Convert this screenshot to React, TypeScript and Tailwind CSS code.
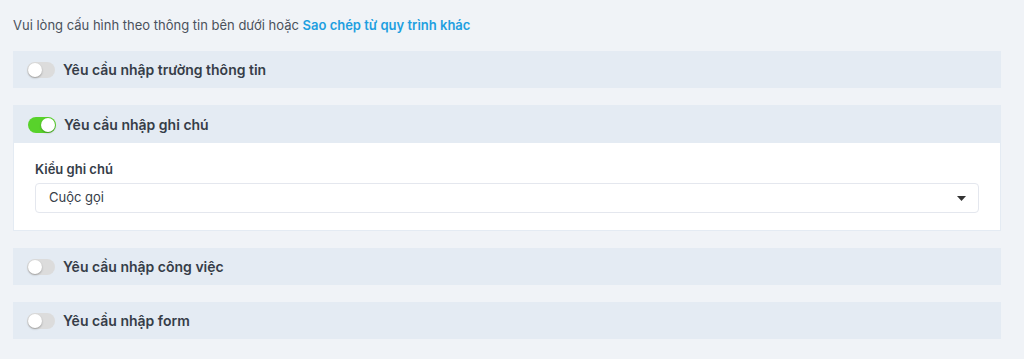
import React from "react";

const Toggle: React.FC<{ on?: boolean }> = ({ on }) => {
  return (
    <span
      className={
        "relative inline-flex h-[16px] w-[28px] shrink-0 items-center rounded-full " +
        (on ? "bg-[#58d22b]" : "bg-[#dcdcdc]")
      }
    >
      <span
        className={
          "absolute top-[1px] h-[14px] w-[14px] rounded-full bg-white shadow-[0_1px_2px_rgba(0,0,0,0.3)] " +
          (on ? "left-[13px]" : "left-[1px]")
        }
      />
    </span>
  );
};

const SectionHeader: React.FC<{ title: string; on?: boolean }> = ({ title, on }) => (
  <div className="flex h-[37px] items-center gap-[8px] bg-[#e4ebf3] px-[14px]">
    <Toggle on={on} />
    <span className="text-[14px] font-semibold text-[#363d48]">{title}</span>
  </div>
);

const App: React.FC = () => {
  return (
    <div
      className="min-h-[359px] w-[1024px] bg-[#f0f3f7] pl-[13px] pr-[23px] pt-[16px]"
      style={{ fontFamily: "Inter, 'Noto Sans', sans-serif" }}
    >
      <p className="mb-[17px] text-[13px] leading-[18px] text-[#4a515b]">
        Vui lòng cấu hình theo thông tin bên dưới hoặc{" "}
        <a href="#" className="font-semibold text-[#1e9fe0]">
          Sao chép từ quy trình khác
        </a>
      </p>

      <div className="flex flex-col gap-[17px]">
        <SectionHeader title="Yêu cầu nhập trường thông tin" />

        <div className="border border-[#e4ebf3]">
          <SectionHeader title="Yêu cầu nhập ghi chú" on />
          <div className="bg-white px-[21px] pb-[17px] pt-[17px]">
            <label className="mb-[5px] block text-[13px] font-semibold leading-[18px] text-[#363d48]">
              Kiểu ghi chú
            </label>
            <div className="flex h-[30px] items-center justify-between rounded-[4px] border border-[#e4e7ee] bg-white pl-[13px] pr-[12px]">
              <span className="text-[13px] text-[#363d48]">Cuộc gọi</span>
              <svg width="9" height="5" viewBox="0 0 9 5">
                <path d="M0 0 L9 0 L4.5 5 Z" fill="#333" />
              </svg>
            </div>
          </div>
        </div>

        <SectionHeader title="Yêu cầu nhập công việc" />
        <SectionHeader title="Yêu cầu nhập form" />
      </div>
    </div>
  );
};

export default App;
